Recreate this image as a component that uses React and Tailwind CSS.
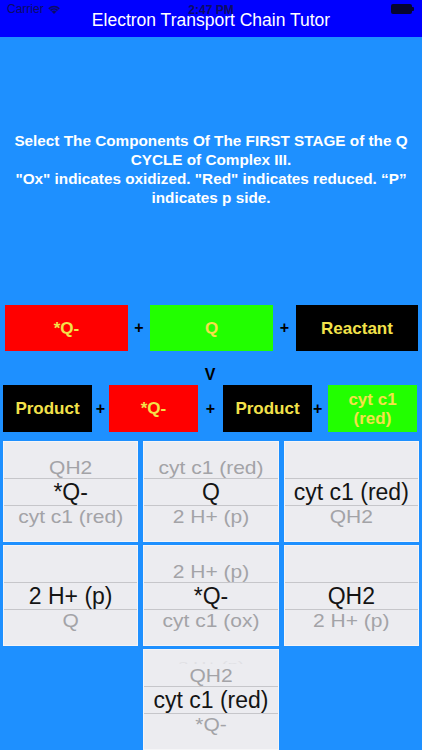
import React from 'react'

const FONT = { fontFamily: '"Liberation Sans", Arial, Helvetica, sans-serif' }

function Box({ color, children, className = '' }) {
  return (
    <div
      className={`h-full flex items-center justify-center text-center text-[17px] leading-[19px] font-bold text-[#f3e24a] ${color} ${className}`}
    >
      {children}
    </div>
  )
}

function Plus({ className = '' }) {
  return <div className={`flex items-center justify-center text-[16px] font-bold text-black ${className}`}>+</div>
}

function Picker({ items }) {
  const [a2, a1, sel, b1, b2] = items
  return (
    <div className="h-[101px] overflow-hidden bg-[#ececf0] border border-[#f5f5f7] flex flex-col">
      <div className="h-[14px] shrink-0 overflow-hidden flex items-end justify-center">
        <span className="text-[18px] leading-[20px] text-[#e0e0e4] -mb-[11px] scale-y-[0.5]">{a2}</span>
      </div>
      <div className="h-[22px] shrink-0 flex items-center justify-center pt-[2px]">
        <span className="text-[21px] leading-[22px] text-[#a3a3a7] scale-y-[0.85]">{a1}</span>
      </div>
      <div className="h-[28px] shrink-0 border-y border-[#c6c6ca] flex items-center justify-center">
        <span className="text-[23px] leading-[26px] text-[#141414]">{sel}</span>
      </div>
      <div className="h-[22px] shrink-0 flex items-center justify-center">
        <span className="text-[21px] leading-[22px] text-[#a3a3a7] scale-y-[0.85]">{b1}</span>
      </div>
      <div className="h-[14px] shrink-0 overflow-hidden flex items-start justify-center">
        <span className="text-[18px] leading-[20px] text-[#e0e0e4] mt-[8px] scale-y-[0.5]">{b2}</span>
      </div>
    </div>
  )
}

function Wifi() {
  return (
    <svg width="12" height="9" viewBox="0 0 12 9" className="ml-[4px]">
      <path d="M6 9 L0.2 3.2 A8.2 8.2 0 0 1 11.8 3.2 Z" fill="#0c0c66" />
      <path d="M1.6 4.6 A6.3 6.3 0 0 1 10.4 4.6" stroke="#0000ff" strokeWidth="0.9" fill="none" />
      <path d="M3.2 6.3 A4 4 0 0 1 8.8 6.3" stroke="#0000ff" strokeWidth="0.9" fill="none" />
    </svg>
  )
}

export default function App() {
  return (
    <div className="w-[422px] h-[750px] overflow-hidden bg-[#1e90ff] flex flex-col" style={FONT}>
      <header className="relative h-[37px] shrink-0 bg-[#0000ff]">
        <div className="absolute inset-x-0 top-0 h-[18px] flex items-center justify-between px-[7px]">
          <div className="flex items-center text-[12px] text-[#0c0c66]">
            Carrier
            <Wifi />
          </div>
          <div className="absolute left-0 right-0 top-[1px] text-center text-[12px] font-bold text-[#0c0c66]">2:47 PM</div>
          <div className="flex items-center mr-[1px]">
            <div className="w-[21px] h-[10px] rounded-[2px] bg-[#050530]" />
            <div className="w-[2px] h-[4px] rounded-r-[1px] bg-[#050530]" />
          </div>
        </div>
        <div className="absolute inset-x-0 top-[10px] text-center text-[17.5px] leading-[20px] text-white">
          Electron Transport Chain Tutor
        </div>
      </header>

      <div className="mt-[94px] text-center text-[15.3px] leading-[19px] font-bold text-white whitespace-nowrap">
        <div>Select The Components Of The FIRST STAGE of the Q</div>
        <div>CYCLE of Complex III.</div>
        <div>"Ox" indicates oxidized. "Red" indicates reduced. “P”</div>
        <div>indicates p side.</div>
      </div>

      <div className="mt-[98px] h-[46px] flex pl-[5px]">
        <Box color="bg-[#ff0000]" className="w-[123px]">*Q-</Box>
        <Plus className="w-[22px]" />
        <Box color="bg-[#22ff00]" className="w-[123px]">Q</Box>
        <Plus className="w-[23px]" />
        <Box color="bg-black" className="w-[122px]">Reactant</Box>
      </div>

      <div className="h-[34px] flex items-end justify-center pb-[2px] pr-[2px]">
        <span className="text-[16px] leading-[16px] font-bold text-black">V</span>
      </div>

      <div className="h-[47px] flex pl-[3px]">
        <Box color="bg-black" className="w-[89px]">Product</Box>
        <Plus className="w-[17px]" />
        <Box color="bg-[#ff0000]" className="w-[89px]">*Q-</Box>
        <Plus className="w-[25px]" />
        <Box color="bg-black" className="w-[89px]">Product</Box>
        <Plus className="w-[16px] justify-start pl-[1px]" />
        <Box color="bg-[#22ff00]" className="w-[89px]">
          cyt c1
          <br />
          (red)
        </Box>
      </div>

      <div className="mt-[9px] px-[3px] grid grid-cols-3 gap-x-[5px] gap-y-[3px]">
        <Picker items={['', 'QH2', '*Q-', 'cyt c1 (red)', '2 H+ (p)']} />
        <Picker items={['', 'cyt c1 (red)', 'Q', '2 H+ (p)', 'cyt c1 (ox)']} />
        <Picker items={['', '', 'cyt c1 (red)', 'QH2', '2 H+ (p)']} />
        <Picker items={['', '', '2 H+ (p)', 'Q', 'cyt c1 (ox)']} />
        <Picker items={['', '2 H+ (p)', '*Q-', 'cyt c1 (ox)', 'Q']} />
        <Picker items={['', '', 'QH2', '2 H+ (p)', 'cyt c1 (ox)']} />
        <div />
        <Picker items={['2 H+ (p)', 'QH2', 'cyt c1 (red)', '*Q-', 'Q']} />
        <div />
      </div>
    </div>
  )
}
